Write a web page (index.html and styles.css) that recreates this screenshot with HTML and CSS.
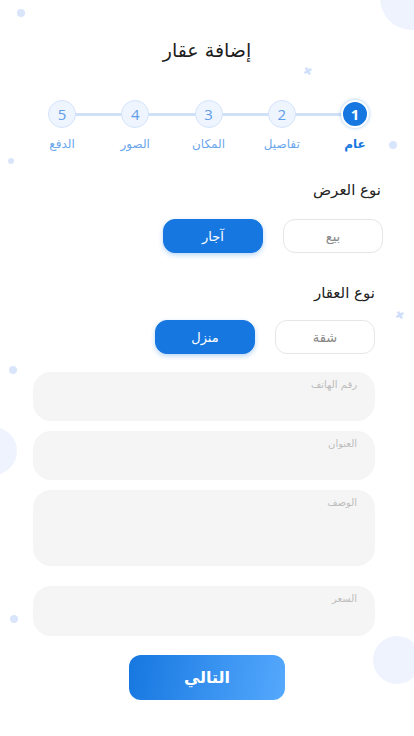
FILE: index.html
```html
<!DOCTYPE html>
<html lang="ar" dir="rtl">
<head>
<meta charset="utf-8">
<link rel="stylesheet" href="styles.css">
</head>
<body>
<div class="page">
  <span class="deco dot d1"></span>
  <span class="deco blob b1"></span>
  <span class="deco star s1">✖</span>
  <span class="deco dot d2"></span>
  <span class="deco dot d3"></span>
  <span class="deco star s2">✖</span>
  <span class="deco dot d4"></span>
  <span class="deco blob b2"></span>
  <span class="deco dot d5"></span>
  <span class="deco blob b3"></span>

  <h1 class="title">إضافة عقار</h1>

  <div class="stepper">
    <div class="step active"><span class="circle">1</span><span class="slabel">عام</span></div>
    <div class="step"><span class="circle">2</span><span class="slabel">تفاصيل</span></div>
    <div class="step"><span class="circle">3</span><span class="slabel">المكان</span></div>
    <div class="step"><span class="circle">4</span><span class="slabel">الصور</span></div>
    <div class="step"><span class="circle">5</span><span class="slabel">الدفع</span></div>
  </div>

  <div class="group g1">
    <div class="glabel">نوع العرض</div>
    <div class="choices">
      <button class="choice">بيع</button>
      <button class="choice on">آجار</button>
    </div>
  </div>

  <div class="group g2">
    <div class="glabel">نوع العقار</div>
    <div class="choices">
      <button class="choice">شقة</button>
      <button class="choice on">منزل</button>
    </div>
  </div>

  <div class="fields">
    <div class="field"><span class="ph">رقم الهاتف</span></div>
    <div class="field"><span class="ph">العنوان</span></div>
    <div class="field tall"><span class="ph">الوصف</span></div>
    <div class="field price"><span class="ph">السعر</span></div>
  </div>

  <div class="actions">
    <button class="next">التالي</button>
  </div>
</div>
</body>
</html>
```
FILE: styles.css
```css
* { box-sizing: border-box; }
html, body { margin: 0; padding: 0; background: #fff; }
body {
  font-family: "DejaVu Sans", "Noto Sans", sans-serif;
  color: #222;
}
.page {
  position: relative;
  width: 414px;
  height: 736px;
  overflow: hidden;
  direction: rtl;
}
.deco { position: absolute; display: block; }
.dot { border-radius: 50%; background: #d9e5fb; }
.d1 { left: 17px; top: 9px; width: 8px; height: 8px; }
.d2 { left: 389px; top: 141px; width: 8px; height: 8px; }
.d3 { left: 8px; top: 158px; width: 6px; height: 6px; }
.d4 { left: 9px; top: 366px; width: 8px; height: 8px; }
.d5 { left: 10px; top: 615px; width: 8px; height: 8px; }
.blob { border-radius: 50%; background: #eef3fe; }
.b1 { left: 380px; top: -34px; width: 64px; height: 64px; }
.b2 { left: -31px; top: 427px; width: 48px; height: 48px; }
.b3 { left: 373px; top: 636px; width: 48px; height: 48px; }
.star { color: #cfdffb; font-size: 11px; line-height: 1; transform: rotate(15deg); }
.s1 { left: 303px; top: 66px; }
.s2 { left: 395px; top: 310px; }

.title {
  margin: 0;
  padding-top: 37px;
  text-align: center;
  font-size: 19px;
  font-weight: normal;
  line-height: 26px;
  color: #1e1e1e;
}

.stepper {
  position: relative;
  display: flex;
  justify-content: space-between;
  margin: 37px 45px 0 0;
  width: 321px;
}
.stepper::before {
  content: "";
  position: absolute;
  left: 14px; right: 14px; top: 13px;
  height: 3px;
  background: #cfe0f7;
}
.step {
  position: relative;
  width: 28px;
  display: flex;
  flex-direction: column;
  align-items: center;
}
.circle {
  width: 28px; height: 28px;
  border-radius: 50%;
  background: #eff5ff;
  border: 1px solid #d3e3fa;
  color: #5e9de8;
  font-family: "Open Sans", sans-serif;
  font-size: 15px;
  display: flex; align-items: center; justify-content: center;
}
.step.active .circle {
  background: #1677e0;
  border: 2px solid #fff;
  box-shadow: 0 0 3px 1px rgba(22,119,224,0.25);
  color: #fff;
  font-weight: 700;
}
.slabel {
  margin-top: 8px;
  white-space: nowrap;
  font-size: 12px;
  color: #6ba6ec;
  line-height: 16px;
}
.step.active .slabel { color: #1677e0; font-weight: bold; }

.group { margin-top: 28px; }
.g1 { padding-right: 31px; }
.g2 { padding-right: 39px; margin-top: 30px; }
.glabel { font-size: 15px; line-height: 20px; color: #222; }
.g1 .glabel { margin-right: 2px; }
.choices {
  display: flex;
  gap: 20px;
  margin-top: 19px;
}
.g2 .choices { margin-top: 17px; }
.choice {
  width: 100px;
  height: 34px;
  border-radius: 12px;
  border: 1px solid #e6e6e6;
  background: #fff;
  color: #888;
  font-family: "DejaVu Sans", sans-serif;
  font-size: 13px;
  padding: 0;
}
.choice.on {
  background: #1677e0;
  border-color: #1677e0;
  color: #fff;
  box-shadow: 0 2px 5px rgba(22,119,224,0.3);
}

.fields {
  margin: 18px 39px 0 33px;
  display: flex;
  flex-direction: column;
  gap: 10px;
}
.field {
  height: 49px;
  border-radius: 18px;
  background: #f5f5f5;
  padding: 7px 18px 0 18px;
}
.field.tall { height: 76px; }
.field.price { margin-top: 10px; height: 50px; }
.ph { display: block; font-size: 10px; line-height: 12px; color: #bdbdbd; }

.actions { display: flex; justify-content: center; margin-top: 19px; }
.next {
  width: 156px;
  height: 45px;
  border: none;
  border-radius: 12px;
  background: linear-gradient(100deg, #1677e0 0%, #55a9fd 100%);
  color: #fff;
  font-family: "DejaVu Sans", sans-serif;
  font-weight: bold;
  font-size: 16px;
}
```
